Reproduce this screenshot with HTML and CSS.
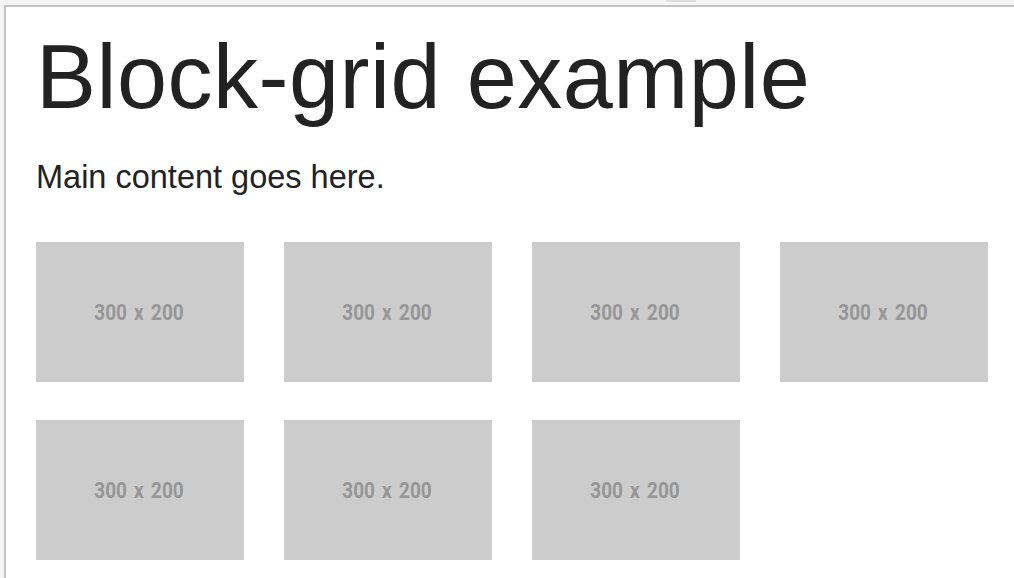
FILE: index.html
```html
<!DOCTYPE html>
<html lang="en">
<head>
<meta charset="utf-8">
<title>Block-grid example</title>
<link rel="stylesheet" href="styles.css">
</head>
<body>
<div class="tab"></div>
<div class="frame">
  <h1 class="title">Block-grid example</h1>
  <p class="lead">Main content goes here.</p>
  <ul class="block-grid">
    <li class="tile"><span>300 x 200</span></li>
    <li class="tile"><span>300 x 200</span></li>
    <li class="tile"><span>300 x 200</span></li>
    <li class="tile"><span>300 x 200</span></li>
    <li class="tile"><span>300 x 200</span></li>
    <li class="tile"><span>300 x 200</span></li>
    <li class="tile"><span>300 x 200</span></li>
  </ul>
</div>
</body>
</html>
```

FILE: styles.css
```css
html, body {
  margin: 0;
  padding: 0;
  height: 100%;
  overflow: hidden;
}
body {
  background: #f4f4f4;
  position: relative;
  font-family: "Liberation Sans", Arial, sans-serif;
  color: #222;
}
.tab {
  position: absolute;
  left: 666px;
  top: 0;
  width: 30px;
  height: 2px;
  background: #dedede;
}
.frame {
  margin: 5px 0 0 4px;
  border-top: 2px solid #c3c3c3;
  border-left: 2px solid #c3c3c3;
  background: #fff;
  height: calc(100% - 5px);
  box-sizing: border-box;
  padding: 20px 0 0 30px;
}
.title {
  margin: 0;
  font-size: 90px;
  line-height: 100px;
  letter-spacing: 0.5px;
  font-weight: normal;
  color: #222;
}
.lead {
  margin: 30px 0 0;
  font-size: 32.5px;
  line-height: 40px;
  color: #222;
}
.block-grid {
  list-style: none;
  margin: 45px 0 0;
  padding: 0;
  display: grid;
  grid-template-columns: repeat(4, 208px);
  column-gap: 40px;
  row-gap: 38px;
}
.tile {
  height: 140px;
  background: #cccccc;
  display: flex;
  align-items: center;
  justify-content: center;
}
.tile span {
  font-family: Roboto, "DejaVu Sans Condensed", sans-serif;
  font-weight: 700;
  font-size: 22px;
  line-height: 24px;
  word-spacing: 3px;
  color: #969696;
  transform: scaleX(0.86);
  margin: 1px 3px 0 0;
}
```
